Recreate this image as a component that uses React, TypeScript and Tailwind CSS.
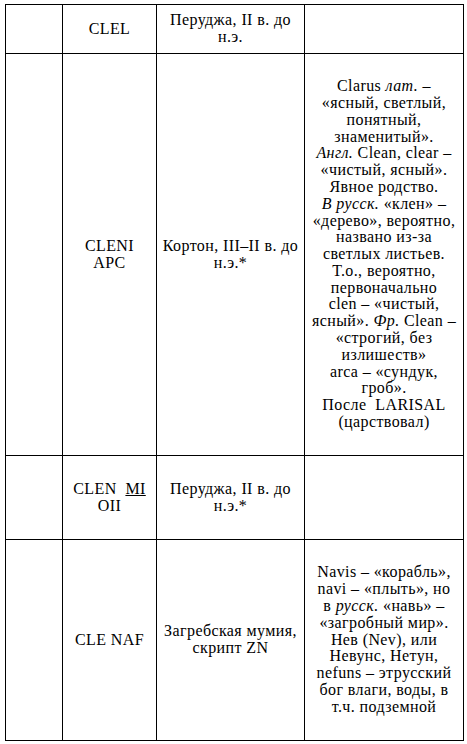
const cell = 'border border-black align-middle text-center p-0'

function Lines({ lines }: { lines: React.ReactNode[] }) {
  return (
    <div className="flex flex-col items-center">
      {lines.map((l, i) => (
        <span key={i} className="whitespace-pre">
          {l}
        </span>
      ))}
    </div>
  )
}

const clenDesc: React.ReactNode[] = [
  <>Clarus <i>лат.</i> –</>,
  '«ясный, светлый,',
  'понятный,',
  'знаменитый».',
  <><i>Англ.</i> Clean, clear –</>,
  '«чистый, ясный».',
  'Явное родство.',
  <><i>В русск.</i> «клен» –</>,
  '«дерево», вероятно,',
  'названо из-за',
  'светлых листьев.',
  'Т.о., вероятно,',
  'первоначально',
  'clen – «чистый,',
  <>ясный». <i>Фр.</i> Clean –</>,
  '«строгий, без',
  'излишеств»',
  'arca – «сундук,',
  'гроб».',
  'После  LARISAL',
  '(царствовал)',
]

const nafDesc: React.ReactNode[] = [
  'Navis – «корабль»,',
  'navi – «плыть», но',
  <>в <i>русск.</i> «навь» –</>,
  '«загробный мир».',
  'Нев (Nev), или',
  'Невунс, Нетун,',
  'nefuns – этрусский',
  'бог влаги, воды, в',
  'т.ч. подземной',
]

export default function App() {
  return (
    <div className="min-h-[744px] w-[467px] bg-white pl-[5px] pt-[4px] [font-family:'Liberation_Serif','Times_New_Roman',serif] text-[16px] leading-[16.8px] tracking-[0.4px] text-black">
      <table className="table-fixed border-collapse w-[458px]">
        <colgroup>
          <col className="w-[57px]" />
          <col className="w-[94px]" />
          <col className="w-[148px]" />
          <col className="w-[159px]" />
        </colgroup>
        <tbody>
          <tr className="h-[49px]">
            <td className={cell}></td>
            <td className={cell}>CLEL</td>
            <td className={cell}>
              <Lines lines={['Перуджа, II в. до', 'н.э.']} />
            </td>
            <td className={cell}></td>
          </tr>
          <tr className="h-[402px]">
            <td className={cell}></td>
            <td className={cell}>
              <Lines lines={['CLENI', 'APC']} />
            </td>
            <td className={cell}>
              <Lines lines={['Кортон, III–II в. до', 'н.э.*']} />
            </td>
            <td className={cell}>
              <Lines lines={clenDesc} />
            </td>
          </tr>
          <tr className="h-[84px]">
            <td className={cell}></td>
            <td className={cell}>
              <Lines lines={[<>CLEN  <u>MI</u></>, 'OII']} />
            </td>
            <td className={cell}>
              <Lines lines={['Перуджа, II в. до', 'н.э.*']} />
            </td>
            <td className={cell}></td>
          </tr>
          <tr className="h-[201px]">
            <td className={cell}></td>
            <td className={cell}>CLE NAF</td>
            <td className={cell}>
              <Lines lines={['Загребская мумия,', 'скрипт ZN']} />
            </td>
            <td className={cell}>
              <Lines lines={nafDesc} />
            </td>
          </tr>
        </tbody>
      </table>
    </div>
  )
}
